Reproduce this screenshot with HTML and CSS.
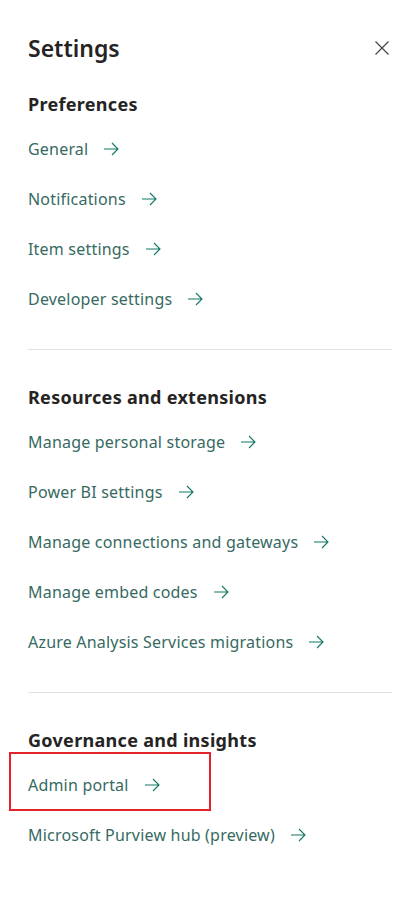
FILE: index.html
```html
<!DOCTYPE html>
<html lang="en">
<head>
  <meta charset="utf-8">
  <title>Settings</title>
  <link rel="stylesheet" href="styles.css">
</head>
<body>
  <div class="panel">
    <div class="panel-header">
      <h1>Settings</h1>
      <button class="close-btn" type="button" aria-label="Close">
        <svg width="16" height="16" viewBox="0 0 16 16"><path d="M1.5 1.5 L14.5 14.5 M14.5 1.5 L1.5 14.5" stroke="#444" stroke-width="1.2" fill="none"/></svg>
      </button>
    </div>

    <section class="group">
      <h2>Preferences</h2>
      <a class="link-row" href="#">General <svg class="arrow" width="16" height="16" viewBox="0 0 16 16"><path d="M1 8 H15 M9 2 L15 8 L9 14" stroke="#117865" stroke-width="1.1" fill="none"/></svg></a>
      <a class="link-row" href="#">Notifications <svg class="arrow" width="16" height="16" viewBox="0 0 16 16"><path d="M1 8 H15 M9 2 L15 8 L9 14" stroke="#117865" stroke-width="1.1" fill="none"/></svg></a>
      <a class="link-row" href="#">Item settings <svg class="arrow" width="16" height="16" viewBox="0 0 16 16"><path d="M1 8 H15 M9 2 L15 8 L9 14" stroke="#117865" stroke-width="1.1" fill="none"/></svg></a>
      <a class="link-row" href="#">Developer settings <svg class="arrow" width="16" height="16" viewBox="0 0 16 16"><path d="M1 8 H15 M9 2 L15 8 L9 14" stroke="#117865" stroke-width="1.1" fill="none"/></svg></a>
    </section>

    <hr class="divider">

    <section class="group">
      <h2>Resources and extensions</h2>
      <a class="link-row" href="#">Manage personal storage <svg class="arrow" width="16" height="16" viewBox="0 0 16 16"><path d="M1 8 H15 M9 2 L15 8 L9 14" stroke="#117865" stroke-width="1.1" fill="none"/></svg></a>
      <a class="link-row" href="#">Power BI settings <svg class="arrow" width="16" height="16" viewBox="0 0 16 16"><path d="M1 8 H15 M9 2 L15 8 L9 14" stroke="#117865" stroke-width="1.1" fill="none"/></svg></a>
      <a class="link-row" href="#">Manage connections and gateways <svg class="arrow" width="16" height="16" viewBox="0 0 16 16"><path d="M1 8 H15 M9 2 L15 8 L9 14" stroke="#117865" stroke-width="1.1" fill="none"/></svg></a>
      <a class="link-row" href="#">Manage embed codes <svg class="arrow" width="16" height="16" viewBox="0 0 16 16"><path d="M1 8 H15 M9 2 L15 8 L9 14" stroke="#117865" stroke-width="1.1" fill="none"/></svg></a>
      <a class="link-row" href="#">Azure Analysis Services migrations <svg class="arrow" width="16" height="16" viewBox="0 0 16 16"><path d="M1 8 H15 M9 2 L15 8 L9 14" stroke="#117865" stroke-width="1.1" fill="none"/></svg></a>
    </section>

    <hr class="divider">

    <section class="group">
      <h2>Governance and insights</h2>
      <a class="link-row marked" href="#">Admin portal <svg class="arrow" width="16" height="16" viewBox="0 0 16 16"><path d="M1 8 H15 M9 2 L15 8 L9 14" stroke="#117865" stroke-width="1.1" fill="none"/></svg><span class="highlight"></span></a>
      <a class="link-row" href="#">Microsoft Purview hub (preview) <svg class="arrow" width="16" height="16" viewBox="0 0 16 16"><path d="M1 8 H15 M9 2 L15 8 L9 14" stroke="#117865" stroke-width="1.1" fill="none"/></svg></a>
    </section>
  </div>
</body>
</html>
```

FILE: styles.css
```css
body {
  margin: 0;
  background: #fff;
  font-family: "Segoe UI", "Noto Sans", sans-serif;
  color: #252423;
}

.panel {
  padding: 30px 21px 40px 28px;
}

.panel-header {
  display: flex;
  justify-content: space-between;
  align-items: center;
  height: 36px;
}

.panel-header h1 {
  margin: 0;
  font-size: 23px;
  font-weight: 600;
  line-height: 36px;
}

.close-btn {
  border: none;
  background: none;
  padding: 0;
  margin-right: 2px;
  display: flex;
  cursor: pointer;
}

.group {
  display: flex;
  flex-direction: column;
}

.group h2 {
  margin: 26px 0 8px;
  font-size: 18px;
  font-weight: 700;
  line-height: 24px;
  letter-spacing: 0.3px;
}

.divider + .group h2 {
  margin-top: 35px;
}

.link-row {
  display: flex;
  align-items: center;
  height: 50px;
  font-size: 16px;
  letter-spacing: 0.2px;
  color: #366a62;
  text-decoration: none;
  align-self: flex-start;
}

.arrow {
  margin-left: 15px;
}

.divider {
  border: none;
  border-top: 1px solid #e1e1e1;
  margin: 25px 0 0;
}

/* red callout around the admin link */
.marked {
  position: relative;
}

.highlight {
  position: absolute;
  left: -19px;
  top: -8px;
  width: 198px;
  height: 55px;
  border: 2px solid #e3222b;
}
```
